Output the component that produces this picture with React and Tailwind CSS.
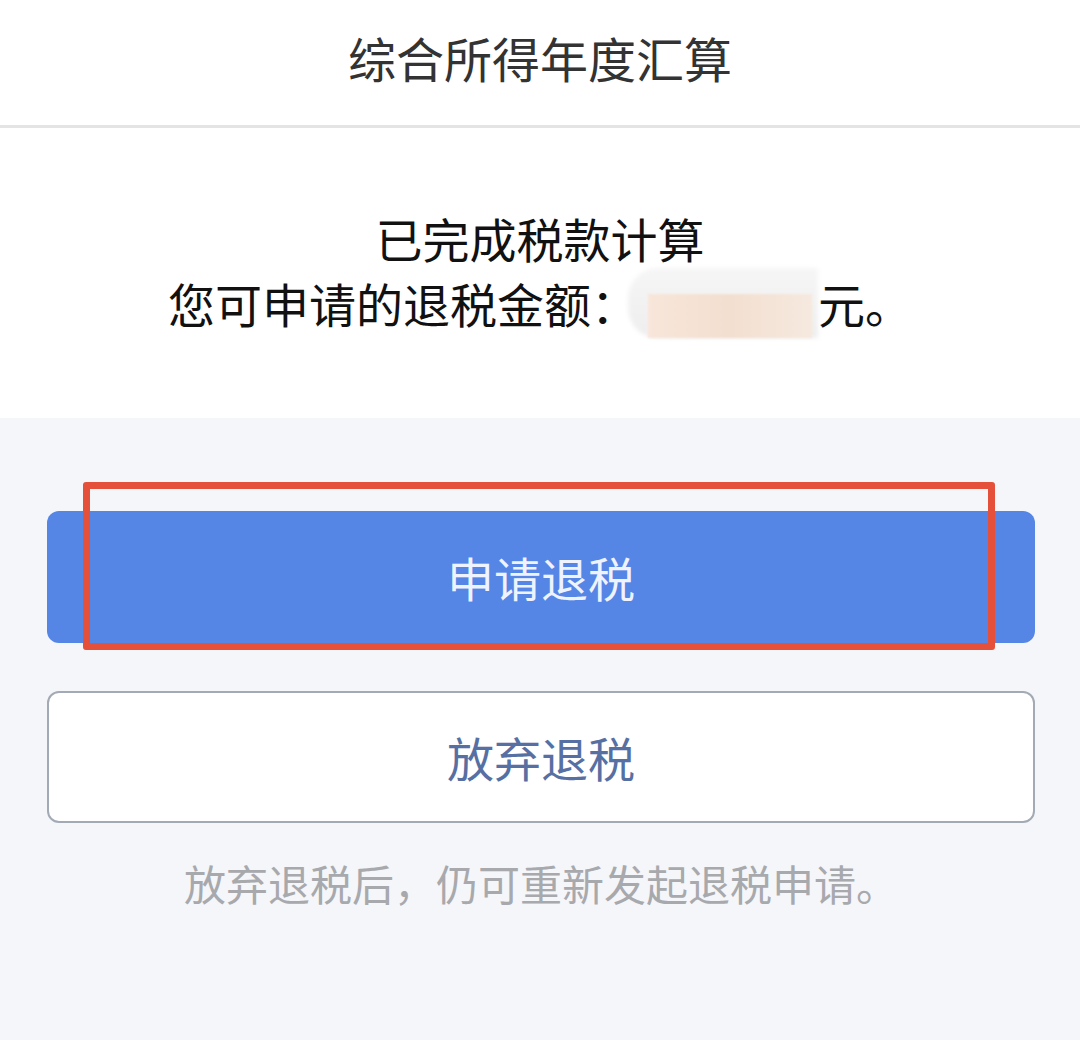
export default function App() {
  return (
    <div
      className="w-[1080px] h-[1040px] bg-[#f5f6fa] overflow-hidden"
      style={{ fontFamily: '"Noto Sans CJK SC", "Noto Sans", sans-serif' }}
    >
      {/* Header */}
      <div className="h-[128px] bg-white flex items-center justify-center border-b-[3px] border-[#e4e4e6]">
        <h1 className="text-[48px] leading-none text-[#333333] -mt-[12px]">综合所得年度汇算</h1>
      </div>

      {/* Result */}
      <div className="bg-white pt-[80px] pb-[80px] flex flex-col items-center text-[#111111] text-[47px] leading-[60px]">
        <div>已完成税款计算</div>
        <div className="flex items-center">
          <span>您可申请的退税金额：</span>
          <span className="relative inline-block w-[190px] h-[70px] -ml-[10px]">
            <span className="absolute inset-0 rounded-l-[30px] bg-gradient-to-b from-[#f6f6f6] to-[#efeeee] blur-[2px]" />
            <span className="absolute left-[20px] right-[6px] top-[26px] bottom-0 bg-gradient-to-r from-[#f8e6da] via-[#f3dfd0] to-[#f6e9df] blur-[1px]" />
          </span>
          <span>元。</span>
        </div>
      </div>

      {/* Actions */}
      <div className="pt-[93px] pl-[47px] pr-[45px] flex flex-col">
        <div className="relative">
          <button className="w-full h-[132px] rounded-[12px] bg-[#5585e5] text-[#eef3ff] text-[47px]">
            申请退税
          </button>
          <div className="absolute left-[36px] top-[-29px] w-[912px] h-[168px] border-[7px] border-[#e4503a] rounded-[3px] pointer-events-none" />
        </div>
        <button className="mt-[48px] w-full h-[132px] rounded-[12px] bg-white border-2 border-[#a3aab6] text-[#5670a3] text-[47px]">
          放弃退税
        </button>
        <p className="mt-[30px] text-center text-[42px] leading-[60px] text-[#a8a9ad]">
          放弃退税后，仍可重新发起退税申请。
        </p>
      </div>
    </div>
  );
}
